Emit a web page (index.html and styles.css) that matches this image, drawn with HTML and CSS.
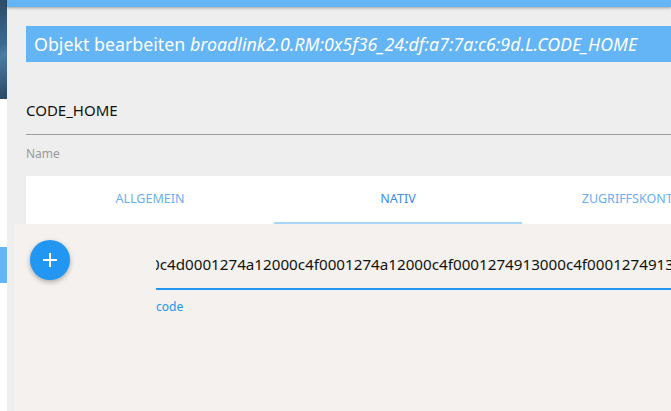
FILE: index.html
```html
<!DOCTYPE html>
<html lang="de">
<head>
  <meta charset="UTF-8">
  <title>Objekt bearbeiten</title>
  <link rel="stylesheet" href="styles.css">
</head>
<body>
<div class="side">
  <div class="side-img"></div>
  <div class="side-mark"></div>
</div>

<div class="dialog">
  <div class="topbar"></div>

  <h2 class="title">Objekt bearbeiten <i>broadlink2.0.RM:0x5f36_24:df:a7:7a:c6:9d.L.CODE_HOME</i></h2>

  <div class="field">
    <div class="field-value">CODE_HOME</div>
    <label class="field-label">Name</label>
  </div>

  <div class="tabs">
    <div class="tab">ALLGEMEIN</div>
    <div class="tab active">NATIV</div>
    <div class="tab">ZUGRIFFSKONTROLLE</div>
  </div>

  <div class="content">
    <button class="fab">
      <svg width="16" height="16" viewBox="0 0 16 16"><path d="M8 1v14M1 8h14" stroke="#fff" stroke-width="2"/></svg>
    </button>
    <div class="code-field">
      <div class="code-input"><span>0c4d0001274a12000c4f0001274a12000c4f0001274913000c4f0001274913000c4f</span></div>
      <label class="code-label">code</label>
    </div>
  </div>
</div>
</body>
</html>
```

FILE: styles.css
```css
body {
  margin: 0;
  height: 411px;
  overflow: hidden;
  display: flex;
  font-family: "Noto Sans", "Open Sans", sans-serif;
  background: #fff;
}
.side {
  width: 7px;
  flex: none;
  display: flex;
  flex-direction: column;
}
.side-img {
  height: 99px;
  background: linear-gradient(160deg, #2c4a66 0%, #3b6a92 45%, #4d7ca3 55%, #2a4763 100%);
}
.side-mark {
  margin-top: 148px;
  height: 36px;
  background: #64b5f6;
}
.dialog {
  flex: 1;
  min-width: 0;
  background: #eeeeee;
  display: flex;
  flex-direction: column;
}
.topbar {
  height: 7px;
  background: #64b5f6;
  box-shadow: 0 1px 3px rgba(0, 0, 0, 0.35);
}
.title {
  margin: 19px 0 0 19px;
  height: 36px;
  line-height: 36px;
  padding-left: 8px;
  background: #64b5f6;
  color: #fff;
  font-size: 17.8px;
  font-weight: normal;
  white-space: nowrap;
  overflow: hidden;
}
.field {
  margin: 38px 0 0 19px;
}
.field-value {
  font-size: 15px;
  color: #111;
  line-height: 20px;
  padding-bottom: 14px;
  border-bottom: 1px solid #9e9e9e;
}
.field-label {
  display: block;
  margin-top: 10px;
  font-size: 12px;
  color: #9a9a9a;
}
.tabs {
  margin: 14px 0 0 19px;
  height: 48px;
  background: #fff;
  display: flex;
  overflow: hidden;
}
.tab {
  width: 248px;
  flex: none;
  text-align: center;
  font-size: 12.5px;
  color: #6aaef2;
  line-height: 46px;
  border-bottom: 2px solid transparent;
  box-sizing: border-box;
  height: 48px;
  white-space: nowrap;
}
.tab.active {
  color: #3d8be8;
  border-bottom-color: #a8d6fb;
}
.content {
  flex: 1;
  margin-left: 7px;
  background: #f4f1ee;
  display: flex;
  padding: 16px 0 0 16px;
}
.fab {
  width: 40px;
  height: 40px;
  flex: none;
  border-radius: 50%;
  border: none;
  background: #2196f3;
  box-shadow: 0 2px 5px rgba(0, 0, 0, 0.3);
  display: flex;
  align-items: center;
  justify-content: center;
  padding: 0;
}
.code-field {
  margin-left: 86px;
  flex: 1;
  min-width: 0;
}
.code-input {
  overflow: hidden;
  white-space: nowrap;
  font-size: 15.2px;
  color: #111;
  line-height: 20px;
  padding: 14px 0 14px;
  border-bottom: 2px solid #2196f3;
  text-indent: -5px;
}
.code-label {
  display: block;
  margin-top: 8px;
  font-size: 12px;
  color: #2196f3;
}
```
